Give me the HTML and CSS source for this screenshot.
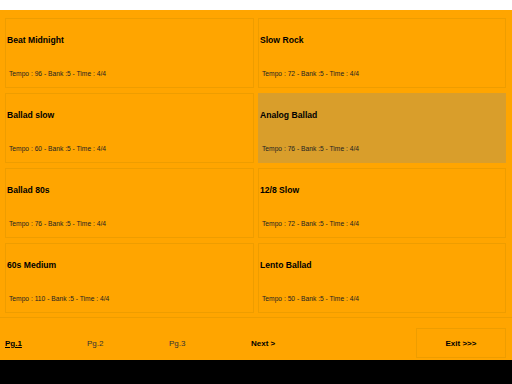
FILE: index.html
```html
<!DOCTYPE html>
<html>
<head>
  <title>Rhythm Select</title>
  <link rel="stylesheet" href="styles.css">
</head>
<body>
  <div class="topbar"></div>
  <div class="app">
    <div class="styles-grid">
      <div class="style-card">
        <div class="style-name">Beat Midnight</div>
        <div class="style-info">Tempo : 96 - Bank :5 - Time : 4/4</div>
      </div>
      <div class="style-card">
        <div class="style-name">Slow Rock</div>
        <div class="style-info">Tempo : 72 - Bank :5 - Time : 4/4</div>
      </div>
      <div class="style-card">
        <div class="style-name">Ballad slow</div>
        <div class="style-info">Tempo : 60 - Bank :5 - Time : 4/4</div>
      </div>
      <div class="style-card selected">
        <div class="style-name">Analog Ballad</div>
        <div class="style-info">Tempo : 76 - Bank :5 - Time : 4/4</div>
      </div>
      <div class="style-card">
        <div class="style-name">Ballad 80s</div>
        <div class="style-info">Tempo : 76 - Bank :5 - Time : 4/4</div>
      </div>
      <div class="style-card">
        <div class="style-name">12/8 Slow</div>
        <div class="style-info">Tempo : 72 - Bank :5 - Time : 4/4</div>
      </div>
      <div class="style-card">
        <div class="style-name">60s Medium</div>
        <div class="style-info">Tempo : 110 - Bank :5 - Time : 4/4</div>
      </div>
      <div class="style-card">
        <div class="style-name">Lento Ballad</div>
        <div class="style-info">Tempo : 50 - Bank :5 - Time : 4/4</div>
      </div>
    </div>

    <div class="pager">
      <a class="page-link current">Pg.1</a>
      <a class="page-link">Pg.2</a>
      <a class="page-link">Pg.3</a>
      <a class="page-link next">Next &gt;</a>
      <button class="exit-btn">Exit &gt;&gt;&gt;</button>
    </div>
  </div>
</body>
</html>
```

FILE: styles.css
```css
body {
  margin: 0;
  background: #000;
  font-family: "Liberation Sans", Arial, sans-serif;
  width: 512px;
  height: 384px;
  overflow: hidden;
}
.topbar {
  height: 10px;
  background: #fff;
}
.app {
  height: 350px;
  background: #ffa500;
  box-sizing: border-box;
  display: flex;
  flex-direction: column;
}
.styles-grid {
  display: grid;
  grid-template-columns: 249px 248px;
  grid-auto-rows: 70px;
  column-gap: 4px;
  row-gap: 5px;
  padding: 8px 0 0 5px;
}
.style-card {
  border: 1px solid #ee9d00;
  box-sizing: border-box;
  padding: 0 0 0 1px;
  display: flex;
  flex-direction: column;
}
.style-card.selected {
  background: #d99e2b;
  border-color: #d99e2b;
}
.style-name {
  font-size: 8.6px;
  font-weight: bold;
  color: #000;
  margin-top: 16px;
}
.style-info {
  font-size: 6.7px;
  color: #222;
  margin-top: 25px;
  padding-left: 2px;
}
.pager {
  flex: 1;
  display: flex;
  align-items: center;
  margin-top: 4px;
  border-top: 1px solid #ee9d00;
  padding: 9px 6px 1px 5px;
}
.page-link {
  width: 82px;
  font-size: 8px;
  color: #333;
}
.page-link.current {
  font-weight: bold;
  color: #000;
  text-decoration: underline;
}
.page-link.next {
  font-weight: bold;
  color: #000;
}
.exit-btn {
  margin-left: auto;
  width: 90px;
  height: 30px;
  background: #ffa500;
  border: 1px solid #ee9d00;
  font-family: inherit;
  font-size: 8px;
  font-weight: bold;
  color: #000;
  padding: 0;
}
```
